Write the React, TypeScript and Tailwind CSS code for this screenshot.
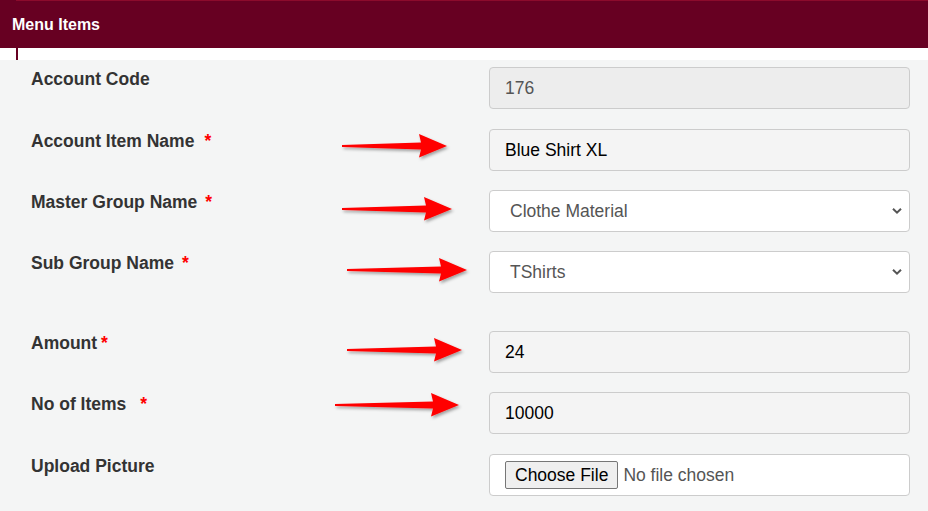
import React from "react";

const font = { fontFamily: '"Liberation Sans", Arial, sans-serif' };

function Arrow({ x1, x2, y }: { x1: number; x2: number; y: number }) {
  const L = x2 - x1;
  const hb = L - 27;
  const pts = [
    [0, -1],
    [hb + 1, -3.4],
    [hb - 1, -12],
    [L, 0],
    [hb - 1, 11.5],
    [hb + 1, 3.6],
    [0, 1],
  ]
    .map(([px, py]) => `${x1 + px},${y + py}`)
    .join(" ");
  return <polygon points={pts} fill="#ff0000" filter="url(#sh)" />;
}

function Label({ text, star, gap }: { text: string; star?: boolean; gap?: string }) {
  return (
    <div className="w-[458px] shrink-0 text-[17.5px] leading-[24px] font-bold text-[#333333]">
      {text}
      {star && <span className={`text-[#ff0000] ${gap ?? "ml-[6px]"}`}>*</span>}
    </div>
  );
}

function Chevron() {
  return (
    <svg width="10" height="7" viewBox="0 0 10 7" className="absolute right-[7px] top-1/2 -translate-y-1/2">
      <path d="M1 1.2 L5 5.2 L9 1.2" fill="none" stroke="#555" strokeWidth="2" />
    </svg>
  );
}

export default function App() {
  return (
    <div className="relative w-[928px] h-[511px] overflow-hidden bg-[#f4f5f5]" style={font}>
      <div className="h-[48px] bg-[#670022] flex flex-col">
        <div className="h-[1px] ml-[16px] bg-[#8c0b2c]" />
        <div className="flex-1 flex items-center px-[12px]">
          <span className="text-white font-bold text-[16px]">Menu Items</span>
        </div>
      </div>
      <div className="h-[12px] bg-white pl-[16px]">
        <div className="w-[2px] h-full bg-[#670022]" />
      </div>
      <div className="pl-[31px] pt-[7px] flex flex-col">
        <div className="flex items-start mb-[20px]">
          <Label text="Account Code" />
          <div className="w-[421px] h-[42px] rounded-[4px] border border-[#cccccc] bg-[#ededed] flex items-center pl-[15px] text-[17.5px] text-[#555555]">
            176
          </div>
        </div>
        <div className="flex items-start mb-[19px]">
          <Label text="Account Item Name" star gap="ml-[10px]" />
          <div className="w-[421px] h-[42px] rounded-[4px] border border-[#cccccc] bg-[#f4f4f4] flex items-center pl-[15px] text-[17.5px] text-black">
            Blue Shirt XL
          </div>
        </div>
        <div className="flex items-start mb-[19px]">
          <Label text="Master Group Name" star gap="ml-[8px]" />
          <div className="relative w-[421px] h-[42px] rounded-[4px] border border-[#cccccc] bg-white flex items-center pl-[20px] text-[17.5px] text-[#555555]">
            Clothe Material
            <Chevron />
          </div>
        </div>
        <div className="flex items-start mb-[38px]">
          <Label text="Sub Group Name" star gap="ml-[8px]" />
          <div className="relative w-[421px] h-[42px] rounded-[4px] border border-[#cccccc] bg-white flex items-center pl-[20px] text-[17.5px] text-[#555555]">
            TShirts
            <Chevron />
          </div>
        </div>
        <div className="flex items-start mb-[19px]">
          <Label text="Amount" star gap="ml-[4px]" />
          <div className="w-[421px] h-[42px] rounded-[4px] border border-[#cccccc] bg-[#f4f4f4] flex items-center pl-[15px] text-[17.5px] text-black">
            24
          </div>
        </div>
        <div className="flex items-start mb-[20px]">
          <Label text="No of Items" star gap="ml-[14px]" />
          <div className="w-[421px] h-[42px] rounded-[4px] border border-[#cccccc] bg-[#f4f4f4] flex items-center pl-[15px] text-[17.5px] text-black">
            10000
          </div>
        </div>
        <div className="flex items-start">
          <Label text="Upload Picture" />
          <div className="w-[421px] h-[42px] rounded-[4px] border border-[#cccccc] bg-white flex items-center pl-[15px] text-[17.5px]">
            <span className="h-[28px] px-[9px] flex items-center rounded-[2px] border border-[#767676] bg-[#efefef] text-black">
              Choose File
            </span>
            <span className="ml-[5px] text-[#555555]">No file chosen</span>
          </div>
        </div>
      </div>
      <svg className="absolute left-0 top-0 pointer-events-none" width="928" height="511">
        <defs>
          <filter id="sh" x="-10%" y="-50%" width="120%" height="200%">
            <feDropShadow dx="1.5" dy="2" stdDeviation="1.5" floodColor="#000" floodOpacity="0.35" />
          </filter>
        </defs>
        <Arrow x1={342} x2={447} y={146} />
        <Arrow x1={342} x2={452} y={209} />
        <Arrow x1={347} x2={467} y={270} />
        <Arrow x1={347} x2={462} y={350} />
        <Arrow x1={335} x2={459} y={405} />
      </svg>
    </div>
  );
}
